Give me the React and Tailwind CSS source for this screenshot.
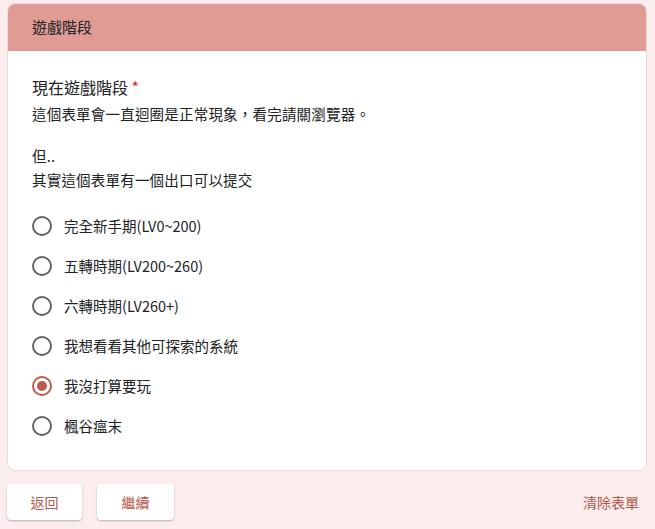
const options = [
  '完全新手期(LV0~200)',
  '五轉時期(LV200~260)',
  '六轉時期(LV260+)',
  '我想看看其他可探索的系統',
  '我沒打算要玩',
  '楓谷瘟末',
];

function Radio({ checked }) {
  return (
    <span
      className={
        'flex h-5 w-5 shrink-0 items-center justify-center rounded-full border-2 ' +
        (checked ? 'border-[#c0594b]' : 'border-[#5f6368]')
      }
    >
      {checked && <span className="h-2.5 w-2.5 rounded-full bg-[#c0594b]" />}
    </span>
  );
}

export default function App() {
  const selected = 4;

  return (
    <div
      className="min-h-[529px] w-[655px] bg-[#fbeced] px-[7px] pt-[3px] text-[#202124]"
      style={{ fontFamily: '"Noto Sans CJK TC", "Noto Sans", sans-serif' }}
    >
      {/* section card */}
      <div className="mr-[1px] overflow-hidden rounded-lg border border-[#e6dcdc] bg-white">
        <div className="flex h-[47px] items-center bg-[#e09c94] px-6 text-[15px] text-[#202124]">
          遊戲階段
        </div>
        <div className="px-6 pb-[34px] pt-[24px]">
          <div className="text-[16px] leading-6">
            現在遊戲階段 <span className="text-[#d93025]">*</span>
          </div>
          <div className="mt-[3px] text-[14.5px] leading-6 tracking-[0.2px] text-[#202124]">
            <p>這個表單會一直迴圈是正常現象，看完請關瀏覽器。</p>
            <p className="h-[18px]"></p>
            <p>但..</p>
            <p>其實這個表單有一個出口可以提交</p>
          </div>
          <div className="mt-[24px] flex flex-col gap-[20px]">
            {options.map((o, i) => (
              <label key={o} className="flex h-5 items-center gap-[12px] text-[14.5px]">
                <Radio checked={i === selected} />
                <span>{o}</span>
              </label>
            ))}
          </div>
        </div>
      </div>

      {/* footer */}
      <div className="mt-[13px] flex items-center">
        <button className="h-9 w-[75px] rounded bg-white text-[14px] text-[#b3584b] shadow-[0_1px_2px_rgba(0,0,0,0.25)]">
          返回
        </button>
        <button className="ml-[15px] h-9 w-[77px] rounded bg-white text-[14px] text-[#b3584b] shadow-[0_1px_2px_rgba(0,0,0,0.25)]">
          繼續
        </button>
        <button className="ml-auto mr-[9px] text-[14px] text-[#b3584b]">清除表單</button>
      </div>
    </div>
  );
}
